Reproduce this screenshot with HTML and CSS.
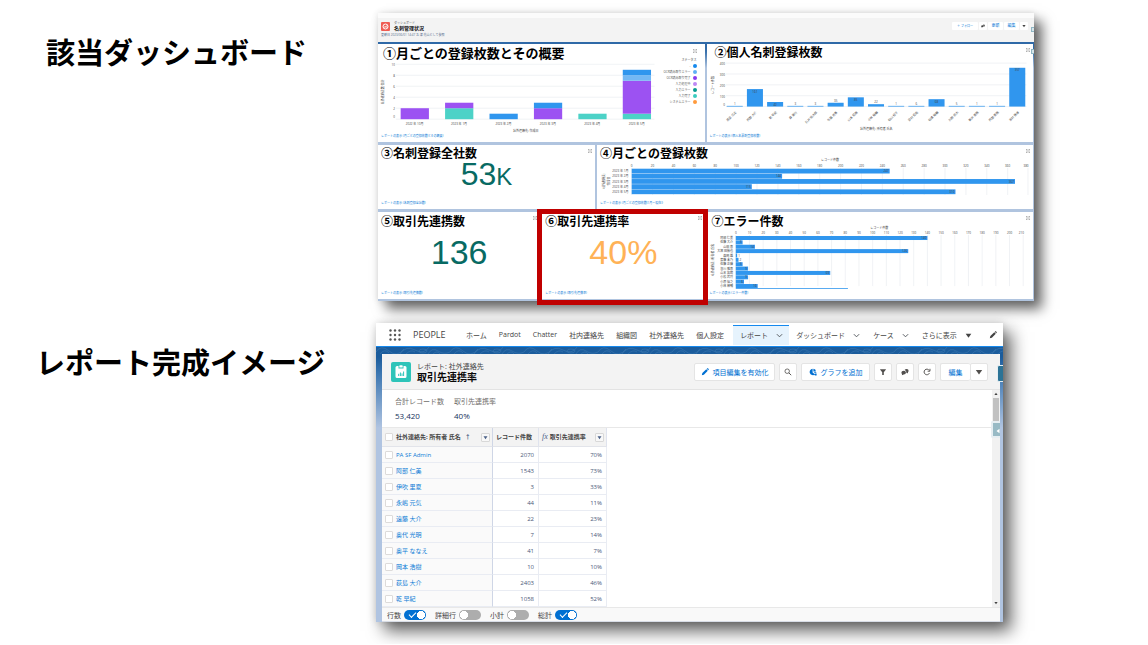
FILE: index.html
```html
<!DOCTYPE html>
<html lang="ja">
<head>
<meta charset="utf-8">
<meta name="viewport" content="width=device-width, initial-scale=1">
<title>取引先連携率</title>
<link rel="stylesheet" href="styles.css">
</head>
<body>
<svg class="defs" width="0" height="0" aria-hidden="true">
  <symbol id="expand" viewBox="0 0 8 8"><path d="M1 3V1h2M5 1h2v2M7 5v2H5M3 7H1V5M1 1l2 2M7 1L5 3M7 7L5 5M1 7l2-2" fill="none" stroke="#777"/></symbol>
  <symbol id="chevron" viewBox="0 0 8 8"><path d="M1 2.5l3 3 3-3" fill="none" stroke="#54595f" stroke-width="1.1"/></symbol>
  <symbol id="triangle" viewBox="0 0 8 8"><path d="M.8 2h6.4L4 6.6z" fill="currentColor"/></symbol>
  <symbol id="pencil" viewBox="0 0 10 10"><path d="M1 9l.7-2.6 4.9-4.9 1.9 1.9-4.9 4.9zM7.2 1l.6-.6q.4-.3.8 0l1 1q.4.4 0 .8l-.6.6z" fill="currentColor"/></symbol>
  <symbol id="chat" viewBox="0 0 10 10"><path d="M4.500 2.500q.7-1.200 2.700-1.200 2.300 0 2.300 2.200 0 1.200-.8 1.800v1.300L6.800 6.200Q7 3 4.500 2.500zM.5 5.700q0-2.400 2.900-2.400 2.800 0 2.800 2.400T3.400 8.200L1.100 9l.2-1.500Q.5 7 .5 5.700z" fill="currentColor"/></symbol>
</svg>
<main class="slide">
  <section class="row row-dashboard">
    <h1 class="caption caption-dashboard">該当ダッシュボード</h1>
    <div class="dashboard">
      <header class="dash-head">
        <svg class="dash-icon" viewBox="0 0 18 18" aria-hidden="true"><rect width="18" height="18" rx="2" fill="#ef5b52"/><circle cx="9" cy="9" r="5" fill="none" stroke="#fff" stroke-width="2"/><path d="M9 10l2.500-3M5 10h8" stroke="#fff" stroke-width="1.500"/></svg>
        <div class="dash-name"><p>ダッシュボード</p><h2>名刺管理状況</h2></div>
        <div class="dash-actions">
          <button type="button" class="follow">＋ フォロー</button>
          <button type="button" aria-label="コメント"><svg viewBox="0 0 10 10"><use href="#chat"/></svg></button>
          <div class="joined"><button type="button">更新</button><button type="button">編集</button><button type="button" class="dark" aria-label="メニュー"><svg viewBox="0 0 8 8"><use href="#triangle"/></svg></button></div>
        </div>
        <p class="dash-updated">更新日 2023/06/01 14:47 お 津 花山として参照</p>
      </header>
      <div class="cards">
        <article class="card half with-legend">
          <div class="card-main">
            <h3 class="large">①月ごとの登録枚数とその概要</h3>
            <svg class="chart" id="chart-status" viewBox="0 0 285 71" role="img" aria-label="月ごとの登録枚数"></svg>
            <a class="source" href="#">レポートの表示 (月ごとの登録枚数とその概要)</a>
          </div>
          <div class="legend">
            <svg class="expand" viewBox="0 0 8 8"><use href="#expand"/></svg>
            <p>ステータス</p>
            <ul>
              <li class="k-blue">-</li><li class="k-sky">OCR読み取りエラー</li><li class="k-purple">OCR読み取り完了</li><li class="k-lilac">入力処理中</li><li class="k-green">入力エラー</li><li class="k-teal">入力完了</li><li class="k-orange">システムエラー</li>
            </ul>
          </div>
        </article>
        <article class="card half">
          <div class="card-title indented"><h3>②個人名刺登録枚数</h3><svg class="expand" viewBox="0 0 8 8"><use href="#expand"/></svg></div>
          <svg class="chart" id="chart-owner" viewBox="0 0 326 74" role="img" aria-label="個人名刺登録枚数"></svg>
          <a class="source" href="#">レポートの表示 (個人名票刺登録枚数)</a>
        </article>
        <article class="card third">
          <div class="card-title"><h3>③名刺登録全社数</h3><svg class="expand" viewBox="0 0 8 8"><use href="#expand"/></svg></div>
          <p class="metric compact">53<small>K</small></p>
          <a class="source" href="#">レポートの表示 (名刺登録全社数)</a>
        </article>
        <article class="card two-thirds">
          <div class="card-title"><h3>④月ごとの登録枚数</h3><svg class="expand" viewBox="0 0 8 8"><use href="#expand"/></svg></div>
          <svg class="chart" id="chart-month" viewBox="0 0 436 40" role="img" aria-label="月ごとの登録枚数"></svg>
          <a class="source" href="#">レポートの表示 (月ごとの登録枚数(1月～現在))</a>
        </article>
        <article class="card quarter">
          <div class="card-title tall"><h3>⑤取引先連携数</h3><svg class="expand" viewBox="0 0 8 8"><use href="#expand"/></svg></div>
          <p class="metric">136</p>
          <a class="source" href="#">レポートの表示 (取引先連携数)</a>
        </article>
        <article class="card quarter highlighted">
          <div class="card-title tall"><h3>⑥取引先連携率</h3><svg class="expand" viewBox="0 0 8 8"><use href="#expand"/></svg></div>
          <p class="metric amber">40%</p>
          <a class="source" href="#">レポートの表示 (取引先連携率)</a>
        </article>
        <article class="card half">
          <div class="card-title tall shifted"><h3>⑦エラー件数</h3><svg class="expand" viewBox="0 0 8 8"><use href="#expand"/></svg></div>
          <svg class="chart" id="chart-error" viewBox="0 0 326 61" role="img" aria-label="エラー件数"></svg>
          <a class="source" href="#">レポートの表示 (エラー件数)</a>
        </article>
      </div>
      <span class="edge-tab first"></span><span class="edge-tab second"></span>
    </div>
  </section>

  <section class="row row-report">
    <h1 class="caption caption-report">レポート完成イメージ</h1>
    <div class="report">
      <nav class="nav">
        <button type="button" class="waffle" aria-label="アプリ"><svg viewBox="0 0 12 12"><g fill="#555"><circle cx="1.500" cy="1.500" r="1.200"/><circle cx="6" cy="1.500" r="1.200"/><circle cx="10.500" cy="1.500" r="1.200"/><circle cx="1.500" cy="6" r="1.200"/><circle cx="6" cy="6" r="1.200"/><circle cx="10.500" cy="6" r="1.200"/><circle cx="1.500" cy="10.500" r="1.200"/><circle cx="6" cy="10.500" r="1.200"/><circle cx="10.500" cy="10.500" r="1.200"/></g></svg></button>
        <span class="app">PEOPLE</span>
        <div class="links">
          <a href="#">ホーム</a><a href="#">Pardot</a><a href="#">Chatter</a><a href="#">社内連絡先</a><a href="#">組織図</a><a href="#">社外連絡先</a><a href="#">個人設定</a>
        </div>
        <a href="#" class="tab current">レポート<svg viewBox="0 0 8 8"><use href="#chevron"/></svg></a>
        <a href="#" class="tab">ダッシュボード<svg viewBox="0 0 8 8"><use href="#chevron"/></svg></a>
        <a href="#" class="tab">ケース<svg viewBox="0 0 8 8"><use href="#chevron"/></svg></a>
        <a href="#" class="tab">さらに表示<svg viewBox="0 0 8 8"><use href="#triangle"/></svg></a>
        <button type="button" class="nav-edit" aria-label="編集"><svg viewBox="0 0 10 10"><use href="#pencil"/></svg></button>
      </nav>
      <svg class="contours" width="100%" height="7" aria-hidden="true">
        <defs><pattern id="topo" width="74" height="7" patternUnits="userSpaceOnUse"><g fill="none" stroke="#3f7ab3" stroke-width=".5"><path d="M0 5q5-8 13-1t15-2M4 7q5-6 9-1M24 7q6-9 15-4t14-3M30 7q5-5 9-2M52 7q4-7 10-3t12 1M57 7q4-4 7 0"/><ellipse cx="47" cy="4" rx="4" ry="2"/></g></pattern></defs>
        <rect width="100%" height="7" fill="url(#topo)"/>
      </svg>
      <div class="sheet">
        <header class="sheet-head">
          <svg class="sheet-icon" viewBox="0 0 20 20" aria-hidden="true"><rect width="20" height="20" rx="2" fill="#2ec4b9"/><path d="M6 4h1.500v2.500h5V4H14q1.500 0 1.500 1.500v9Q15.500 16 14 16H6q-1.500 0-1.500-1.500v-9Q4.500 4 6 4z" fill="#fff"/><rect x="8.300" y="3.300" width="3.400" height="2.300" rx=".7" fill="#fff"/><path d="M7.700 14v-2.200M9.400 14v-3.500M11 14v-2.600M12.600 14V9.500" stroke="#2ec4b9"/></svg>
          <div class="sheet-name"><p>レポート: 社外連絡先</p><h2>取引先連携率</h2></div>
          <div class="tools">
            <button type="button" class="wide"><svg viewBox="0 0 10 10"><use href="#pencil"/></svg>項目編集を有効化</button>
            <button type="button" class="icon" aria-label="検索"><svg viewBox="0 0 10 10"><circle cx="4" cy="4" r="2.800" fill="none" stroke="currentColor"/><path d="M6 6l3 3" stroke="currentColor" stroke-width="1.200"/></svg></button>
            <button type="button" class="graph"><svg viewBox="0 0 10 10"><path d="M4.500 1v4.500l3 2.500A4 4 0 1 1 4.500 1zM5.500 1a3.500 3.500 0 0 1 3.200 3.300H5.500zM5.800 5.200h3.300v1.200H7zM7.200 7h2.300v2.500H7.200z" fill="currentColor"/></svg>グラフを追加</button>
            <button type="button" class="icon" aria-label="検索条件"><svg viewBox="0 0 10 10"><path d="M1.500 1.500h7q.4.400 0 .8L6 5.200v3.600H4V5.200L1.500 2.300q-.4-.4 0-.8z" fill="currentColor"/></svg></button>
            <button type="button" class="icon" aria-label="コメント"><svg viewBox="0 0 10 10"><use href="#chat"/></svg></button>
            <button type="button" class="icon" aria-label="更新"><svg viewBox="0 0 10 10"><path d="M8 6.500A3.500 3.500 0 1 1 7.800 3M8.700 1v3H5.800" fill="none" stroke="currentColor" stroke-width="1.200"/></svg></button>
            <div class="joined"><button type="button" class="edit">編集</button><button type="button" class="icon" aria-label="メニュー"><svg viewBox="0 0 8 8"><use href="#triangle"/></svg></button></div>
          </div>
        </header>
        <div class="body">
          <div class="content">
            <dl class="totals">
              <div><dt>合計レコード数</dt><dd>53,420</dd></div>
              <div><dt>取引先連携率</dt><dd>40%</dd></div>
            </dl>
            <table class="grid">
              <colgroup><col class="c-name"><col class="c-count"><col class="c-rate"></colgroup>
              <thead><tr>
                <th><div class="cell"><input type="checkbox" aria-label="すべて選択">社外連絡先: 所有者 氏名<span class="sort">↑</span><button type="button" aria-label="列メニュー"><svg viewBox="0 0 8 8"><use href="#triangle"/></svg></button></div></th>
                <th><div class="cell">レコード件数</div></th>
                <th><div class="cell"><i class="fx">fx</i>取引先連携率<button type="button" aria-label="列メニュー"><svg viewBox="0 0 8 8"><use href="#triangle"/></svg></button></div></th>
              </tr></thead>
              <tbody>
                <tr><td><div class="cell"><input type="checkbox" aria-label="PA SF Admin"><a href="#">PA SF Admin</a></div></td><td>2070</td><td>70%</td></tr>
                <tr><td><div class="cell"><input type="checkbox" aria-label="阿部 仁美"><a href="#">阿部 仁美</a></div></td><td>1543</td><td>73%</td></tr>
                <tr><td><div class="cell"><input type="checkbox" aria-label="伊吹 里夏"><a href="#">伊吹 里夏</a></div></td><td>3</td><td>33%</td></tr>
                <tr><td><div class="cell"><input type="checkbox" aria-label="永嶋 元気"><a href="#">永嶋 元気</a></div></td><td>44</td><td>11%</td></tr>
                <tr><td><div class="cell"><input type="checkbox" aria-label="遠藤 大介"><a href="#">遠藤 大介</a></div></td><td>22</td><td>23%</td></tr>
                <tr><td><div class="cell"><input type="checkbox" aria-label="奥代 光明"><a href="#">奥代 光明</a></div></td><td>7</td><td>14%</td></tr>
                <tr><td><div class="cell"><input type="checkbox" aria-label="奥平 ななえ"><a href="#">奥平 ななえ</a></div></td><td>41</td><td>7%</td></tr>
                <tr><td><div class="cell"><input type="checkbox" aria-label="岡本 浩樹"><a href="#">岡本 浩樹</a></div></td><td>10</td><td>10%</td></tr>
                <tr><td><div class="cell"><input type="checkbox" aria-label="荻島 大介"><a href="#">荻島 大介</a></div></td><td>2403</td><td>46%</td></tr>
                <tr><td><div class="cell"><input type="checkbox" aria-label="乾 早紀"><a href="#">乾 早紀</a></div></td><td>1058</td><td>52%</td></tr>
              </tbody>
            </table>
          </div>
          <div class="scrollbar" aria-hidden="true"><svg class="up" viewBox="0 0 8 8"><use href="#triangle"/></svg><span></span><svg class="down" viewBox="0 0 8 8"><use href="#triangle"/></svg></div>
        </div>
        <footer class="switches">
          <label>行数<input type="checkbox" checked></label>
          <label>詳細行<input type="checkbox"></label>
          <label>小計<input type="checkbox"></label>
          <label>総計<input type="checkbox" checked></label>
        </footer>
      </div>
      <span class="side-tab upper"></span><span class="side-tab lower"><svg viewBox="0 0 8 8"><path d="M6 1v6L2 4z" fill="#fff"/></svg></span>
    </div>
  </section>
</main>
<script src="charts.js"></script>
</body>
</html>
```

FILE: styles.css
```css
* { box-sizing: border-box; }
body, h1, h2, h3, p, ul, dl, dd { margin: 0; padding: 0; }
body {
  background: #fff;
  color: #000;
  font-family: "Open Sans", "Noto Sans CJK JP", sans-serif;
}
a { color: #0b7bd6; text-decoration: none; }
ul { list-style: none; }
button {
  margin: 0;
  padding: 0;
  border: 0;
  background: none;
  color: inherit;
  font: inherit;
}
svg { display: block; }
.defs { position: absolute; }

/* Page rows */
.slide { display: flex; flex-direction: column; gap: 22px; padding: 13px 0 22px; overflow: hidden; }
.row { display: grid; align-items: start; }
.row-dashboard { grid-template-columns: minmax(0, 378fr) minmax(0, 656fr) minmax(0, 114fr); }
.row-report { grid-template-columns: minmax(0, 376fr) minmax(0, 627fr) minmax(0, 145fr); }
.caption {
  padding-top: 18px;
  font: bold 29px/40px "Noto Sans CJK JP", sans-serif;
  white-space: nowrap;
}
.caption-dashboard { padding-left: 46px; }
.caption-report { padding-left: 36px; }

/* Dashboard */
.dashboard {
  position: relative;
  border-top: 5px solid #fbfbfb;
  background: linear-gradient(#2f69a7 30px, #3a72ad 34px, #b0c4df 50px);
  box-shadow: 8px 8px 12px rgba(0, 0, 0, .6), 0 0 7px rgba(0, 0, 0, .12);
}
.dash-head {
  display: grid;
  grid-template-columns: 9px 1fr auto;
  column-gap: 4px;
  align-items: center;
  padding: 3px 6px 4px 3px;
  background: #f3f3f3;
  font-size: 3px;
  line-height: 4px;
  color: #555;
}
.dash-icon { width: 9px; height: 9px; }
.dash-name h2 { font: bold 5px/6px "Noto Sans CJK JP", sans-serif; color: #111; }
.dash-updated { grid-column: 1 / -1; padding-top: 2px; line-height: 5px; color: #536b8c; }
.dash-actions { display: flex; gap: 1px; color: #0b7bd6; font-size: 4px; line-height: 8px; }
.dash-actions button { display: flex; align-items: center; justify-content: center; min-width: 8px; height: 8px; border-radius: 1px; background: #fff; }
.dash-actions .follow { width: 26px; font-size: 3px; }
.dash-actions .joined button { width: 15px; }
.dash-actions svg { width: 4px; height: 4px; color: #444; }
.dash-actions .joined .dark { width: 8px; }
.joined { display: flex; gap: 1px; }
.cards {
  display: grid;
  grid-template-columns: repeat(12, minmax(0, 1fr));
  gap: 3px 2px;
  padding: 2px 1px 2px 0;
}
.card { position: relative; display: flex; flex-direction: column; padding-bottom: 3px; background: #fff; }
.half { grid-column: span 6; }
.third { grid-column: span 4; }
.two-thirds { grid-column: span 8; }
.quarter { grid-column: span 3; }
.card h3 { font: bold 12px/16px "Noto Sans CJK JP", sans-serif; white-space: nowrap; }
.card .large { padding-left: 5px; font-size: 13px; line-height: 18px; }
.card-title { display: flex; justify-content: space-between; padding: 0 3px; }
.card .tall h3 { line-height: 18px; }
.card-title.indented { padding-left: 8px; }
.card-title.shifted { padding-left: 5px; }
.expand { width: 4px; height: 4px; margin-top: 4px; }
.chart { width: 100%; height: auto; overflow: visible; }
.chart text { font: 3px "Open Sans", "Noto Sans CJK JP", sans-serif; fill: #444; }
.source { margin-top: auto; padding-left: 3px; font-size: 3px; line-height: 5px; white-space: nowrap; }
.with-legend { display: grid; grid-template-columns: minmax(0, 1fr) 42px; }
.card-main { display: flex; flex-direction: column; }
.legend { padding-right: 8px; font-size: 3px; line-height: 6px; text-align: right; color: #555; white-space: nowrap; }
.legend .expand { margin: 5px 0 4px auto; }
.legend li { display: flex; align-items: center; justify-content: flex-end; gap: 2px; }
.legend li::after { content: ""; width: 4px; height: 4px; border-radius: 50%; background: currentColor; }
.legend .k-blue::after { background: #1589ee; }
.legend .k-sky::after { background: #5fb0f5; }
.legend .k-purple::after { background: #8a3af0; }
.legend .k-lilac::after { background: #bd88f5; }
.legend .k-green::after { background: #069b91; }
.legend .k-teal::after { background: #3accc0; }
.legend .k-orange::after { background: #ff9a3c; }
.metric {
  color: #086a63;
  font: 34px/45px "Liberation Sans", Arial, sans-serif;
  text-align: center;
}
.metric.compact { font-size: 32px; line-height: 26px; }
.metric small { font-size: 24px; line-height: 1; }
.metric.amber { color: #ffb256; }
.highlighted::after {
  content: "";
  position: absolute;
  z-index: 1;
  inset: -3px -3px -6px -5px;
  border: 5px solid #c00000;
}
.edge-tab { position: absolute; right: 0; width: 3px; height: 5px; border: 1px solid #8fb6c4; border-right: 0; background: #d5e5ea; }
.edge-tab.first { top: 9px; }
.edge-tab.second { top: 31px; }

/* Report */
.report {
  position: relative;
  background: linear-gradient(#1b5c9c 34px, #3b76b1 50px, #b0c4e1 105px);
  box-shadow: 8px 9px 16px rgba(0, 0, 0, .62), 0 0 8px rgba(0, 0, 0, .14);
  font-size: 7px;
}
.nav {
  display: flex;
  align-items: center;
  height: 24px;
  padding-left: 13px;
  border-bottom: 1px solid #1589ee;
  background: #fff;
  color: #444;
  white-space: nowrap;
}
.nav a { color: inherit; }
.waffle svg { width: 12px; height: 12px; }
.app { width: 52px; padding-left: 12px; font-size: 9px; }
.links { display: flex; gap: 12px; padding: 0 9px 0 13px; }
.tab { display: flex; align-items: center; gap: 8px; height: 20px; padding: 0 6px 0 7px; border-top: 1px solid transparent; }
.tab.current { border-top-color: #1589ee; background: #e6f3fd; }
.tab svg { width: 7px; height: 7px; }
.nav-edit { margin: 0 6px 0 auto; }
.nav-edit svg { width: 8px; height: 8px; }
.contours { width: 100%; }
.sheet { margin: 0 3px 0 6px; background: #fff; }
.sheet-head { display: flex; align-items: center; height: 36px; padding: 1px 12px 0 9px; border-bottom: 1px solid #e3e3e3; border-radius: 2px 2px 0 0; background: #f3f3f3; }
.sheet-icon { flex: none; width: 20px; height: 20px; }
.sheet-name { padding-left: 6px; line-height: 9px; color: #444; white-space: nowrap; }
.sheet-name h2 { font: bold 10px/12px "Noto Sans CJK JP", sans-serif; color: #080707; }
.tools { display: flex; gap: 4px; margin-left: auto; color: #0070d2; white-space: nowrap; }
.tools button { display: flex; align-items: center; justify-content: center; gap: 4px; height: 18px; border: 1px solid #e4e4e4; border-radius: 2px; background: #fff; }
.tools svg { width: 8px; height: 8px; }
.tools .wide { width: 81px; }
.tools .graph { width: 69px; }
.tools .icon { width: 18px; color: #514f4d; }
.tools .joined { gap: 0; }
.tools .edit { width: 30px; border-right: 0; }
.body { display: flex; }
.content { flex: 1; min-width: 0; }
.totals { display: flex; gap: 10px; height: 38px; padding: 6px 0 0 13px; border-bottom: 1px solid #e8e8e8; }
.totals dt { line-height: 11px; color: #706e6b; }
.totals dd { font-size: 8px; line-height: 17px; color: #16325c; }
.grid { width: 225px; border-collapse: separate; border-spacing: 0; table-layout: fixed; font-size: 6px; line-height: 8px; color: #4a5878; }
.c-name { width: 111px; }
.c-count { width: 46px; }
.c-rate { width: 68px; }
.grid th { height: 19px; padding: 0; border-right: 1px solid #dfe3ee; border-bottom: 1px solid #e2e4ea; background: #f3f3f3; color: #444; white-space: nowrap; }
.grid td { height: 16px; padding: 0 4px 0 0; border-right: 1px solid #e9ecf3; border-bottom: 1px solid #e9ecf3; text-align: right; }
.grid td:first-child { background: #fafafa; border-right-color: #cfd6e6; }
.grid th:first-child { border-right-color: #cfd6e6; }
.cell { display: flex; align-items: center; padding-left: 3px; }
.cell input { appearance: none; width: 8px; height: 8px; margin: 0 3px 0 0; border: 1px solid #dddbda; border-radius: 1px; background: #fff; }
.cell button { width: 9px; height: 9px; margin: 0 2px 0 auto; padding: 1px; border: 1px solid #d8d8d8; border-radius: 1px; background: #f8f8f8; color: #4c6288; }
.sort { padding-left: 4px; color: #4c6288; }
.fx { padding-right: 2px; color: #4c6288; font: italic 8px/8px "Liberation Serif", serif; }
.scrollbar { display: flex; flex-direction: column; width: 8px; padding: 2px 1px; background: #f1f1f1; color: #444; }
.scrollbar svg { width: 4px; height: 4px; margin: 0 auto; }
.scrollbar .up { transform: rotate(180deg); }
.scrollbar .down { margin-top: auto; }
.scrollbar span { height: 28px; margin-top: 2px; background: #c1c1c1; }
.switches { display: flex; gap: 9px; height: 15px; padding-left: 5px; border-top: 1px solid #e8e8e8; border-bottom: 1px solid #d8dde6; background: #f9f9f9; color: #444; }
.switches label { display: flex; align-items: center; gap: 3px; }
.switches input {
  display: flex;
  align-items: center;
  appearance: none;
  width: 22px;
  height: 10px;
  margin: 0;
  border-radius: 5px;
  background: radial-gradient(circle at 5px 5px, #fff 4px, transparent 4px) #adadad;
}
.switches input:checked { background: radial-gradient(circle at 17px 5px, #fff 4px, transparent 4px) #0070d2; }
.switches input:checked::before {
  content: "";
  width: 6px;
  height: 3px;
  margin: 0 0 2px 5px;
  border: solid #fff;
  border-width: 0 0 1px 1px;
  transform: rotate(-45deg);
}
.side-tab { position: absolute; right: 0; border: 1px solid #e6eef2; border-right: 0; border-radius: 2px 0 0 2px; }
.side-tab.upper { top: 42px; width: 6px; height: 17px; background: #2c7396; }
.side-tab.lower { top: 98px; right: 3px; width: 9px; height: 17px; padding: 5px 0 0 2px; border-width: 2px; border-right: 0; background: #98bac5; }
.side-tab svg { width: 6px; height: 6px; }
```

FILE: charts.js
```js
const BLUE = '#3096ee', SKY = '#74b8f4', PURPLE = '#9c52f2', TEAL = '#4cd2c7', GRID = '#e9edf0';

const rect = (x, y, w, h, fill) => `<rect x="${x}" y="${y}" width="${w}" height="${h}" fill="${fill}"/>`;
const line = (x1, y1, x2, y2) => `<path d="M${x1} ${y1}L${x2} ${y2}" stroke="${GRID}" stroke-width=".7"/>`;
const text = (x, y, s, anchor = 'middle', angle = 0) =>
  `<text x="${x}" y="${y}" text-anchor="${anchor}"${angle ? ` transform="rotate(${angle} ${x} ${y})"` : ''}>${s}</text>`;
const draw = (id, parts) => { document.getElementById(id).innerHTML = parts.join(''); };

function statusChart() {
  const out = [], base = 57.3, unit = 5.5;
  for (let v = 0; v <= 10; v += 2) {
    out.push(line(18, base - v * unit, 277, base - v * unit));
    out.push(text(17, base - v * unit + (v ? 2 : -1), v, 'end'));
  }
  const months = [
    ['2022 年 10月', [[PURPLE, 2]]],
    ['2023 年 1月', [[TEAL, 2], [PURPLE, 1]]],
    ['2023 年 2月', [[BLUE, 1]]],
    ['2023 年 3月', [[PURPLE, 2], [BLUE, 1]]],
    ['2023 年 4月', [[TEAL, 1]]],
    ['2023 年 5月', [[TEAL, 1], [PURPLE, 6], [SKY, 1], [BLUE, 1]]]
  ];
  months.forEach(([name, stack], i) => {
    const x = 22.7 + i * 44.5;
    let y = base;
    stack.forEach(([fill, v]) => { y -= v * unit; out.push(rect(x, y, 28.3, v * unit, fill)); });
    out.push(text(x + 14, 63, name));
  });
  out.push(text(148, 70, '社外連絡先: 作成日'), text(6, 30, '社外連絡先数 合計', 'middle', -90));
  draw('chart-status', out);
}

function ownerChart() {
  const out = [], base = 46.5, unit = 0.1085;
  for (let v = 0; v <= 400; v += 100) {
    out.push(line(19, base - v * unit, 319, base - v * unit));
    out.push(text(18, base - v * unit + (v ? 2 : -1), v, 'end'));
  }
  const owners = [
    ['原島 広之', 1], ['阿部 大介', 161], ['乾 早紀', 42], ['森 朋行', 3], ['石井 慎太郎', 3],
    ['佐藤 絢香', 35], ['山本 拓朗', 85], ['小林 裕輔', 22], ['松山 桂子', 1], ['安村 拓哉', 6],
    ['松浦 裕輔', 68], ['川野 悠太', 5], ['新井 美穂', 1], ['阿部 美穂', 1], ['吉村 雅輝', 357]
  ];
  owners.forEach(([name, v], i) => {
    const x = 19.7 + i * 20.15, h = Math.max(v * unit, 0.7);
    out.push(rect(x, base - h, 16, h, BLUE));
    out.push(text(x + 8, v > 40 ? base - h + 3.5 : base - h - 1, v));
    out.push(text(x + 10, 52.5, name, 'end', -45));
  });
  out.push(text(169, 70, '社外連絡先: 所有者 氏名'), text(7, 25, 'レコード件数', 'middle', -90));
  draw('chart-owner', out);
}

function monthChart() {
  const out = [], left = 34.7, unit = 1.0444;
  for (let v = 0; v <= 380; v += 20) {
    const x = left + v * unit;
    out.push(line(Math.min(x, 431), 7, Math.min(x, 431), 34), text(Math.min(x, 429), 5.5, v));
  }
  [247, 144, 367, 115, 310].forEach((v, i) => {
    const y = 7.7 + i * 5.17;
    out.push(rect(left, y, v * unit, 4.8, BLUE), text(left + v * unit - 1, y + 3.5, v, 'end'));
    out.push(text(31.5, y + 3.5, `2023 年 ${i + 1}月`, 'end'));
  });
  out.push(text(233, 0, 'レコード件数'), text(7.5, 20, '社外連絡先:', 'middle', -90), text(13, 20, '作成日', 'middle', -90));
  draw('chart-month', out);
}

function errorChart() {
  const out = [], left = 28.7, unit = 1.367;
  for (let v = 0; v <= 210; v += 10) {
    const x = left + v * unit;
    out.push(line(x, 5, x, 56), text(Math.min(x, 314), 4.3, v));
  }
  const errors = [
    ['阿部 仁美', 140], ['佐藤 大介', 5], ['山田 恵', 14], ['大塚 田勝也', 126], ['森岡 雄', 1], ['斎藤 未乃', 2],
    ['佐藤 正輝', 5], ['皆川 雅恵', 9], ['山本 拓朗', 69], ['小松 武博', 9], ['小原 信之', 6], ['小林 裕輔', 16]
  ];
  errors.forEach(([name, v], i) => {
    const y = 6 + i * 4.36, end = left + v * unit;
    out.push(rect(left, y, v * unit, 4, BLUE), text(26, y + 3.1, name, 'end'));
    out.push(v > 4 ? text(end - 1, y + 3.1, v, 'end') : text(end + 1, y + 3.1, v, 'start'));
  });
  out.push(rect(left, 58, 112, 0.8, BLUE));
  out.push(text(172, -1.3, 'レコード件数'), text(7, 30, '社外連絡先: 所有者 氏名', 'middle', -90));
  draw('chart-error', out);
}

statusChart();
ownerChart();
monthChart();
errorChart();
```
